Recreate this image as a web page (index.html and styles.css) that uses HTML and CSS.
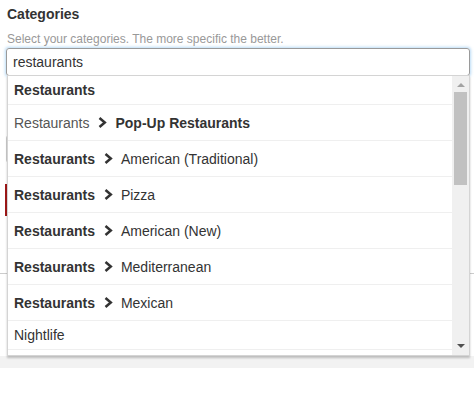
FILE: index.html
```html
<!DOCTYPE html>
<html>
<head>
<meta charset="utf-8">
<link rel="stylesheet" href="styles.css">
</head>
<body>
<div class="page">
  <div class="title">Categories</div>
  <div class="hint">Select your categories. The more specific the better.</div>
  <div class="input">restaurants</div>
  <div class="behind-box"></div>
  <div class="behind-red"></div>
  <div class="behind-rule"></div>
  <div class="band"></div>

  <div class="dropdown">
    <div class="list">
      <div class="row"><b>Restaurants</b></div>
      <div class="row sub"><span class="muted">Restaurants</span><svg class="chev" viewBox="0 0 9 11"><polyline points="1.5,1 6.8,5.5 1.5,10"/></svg><b>Pop-Up Restaurants</b></div>
      <div class="row sub"><b>Restaurants</b><svg class="chev" viewBox="0 0 9 11"><polyline points="1.5,1 6.8,5.5 1.5,10"/></svg><span>American (Traditional)</span></div>
      <div class="row sub"><b>Restaurants</b><svg class="chev" viewBox="0 0 9 11"><polyline points="1.5,1 6.8,5.5 1.5,10"/></svg><span>Pizza</span></div>
      <div class="row sub"><b>Restaurants</b><svg class="chev" viewBox="0 0 9 11"><polyline points="1.5,1 6.8,5.5 1.5,10"/></svg><span>American (New)</span></div>
      <div class="row sub"><b>Restaurants</b><svg class="chev" viewBox="0 0 9 11"><polyline points="1.5,1 6.8,5.5 1.5,10"/></svg><span>Mediterranean</span></div>
      <div class="row sub"><b>Restaurants</b><svg class="chev" viewBox="0 0 9 11"><polyline points="1.5,1 6.8,5.5 1.5,10"/></svg><span>Mexican</span></div>
      <div class="row"><span>Nightlife</span></div>
      <div class="row"></div>
    </div>
    <div class="scrollbar">
      <div class="arrow up"></div>
      <div class="track"><div class="thumb"></div></div>
      <div class="arrow down"></div>
    </div>
  </div>
</div>
</body>
</html>
```
FILE: styles.css
```css
html, body {
  margin: 0;
  padding: 0;
  background: #fff;
}
body {
  font-family: "Liberation Sans", Arial, sans-serif;
  color: #333;
  width: 474px;
  height: 404px;
  overflow: hidden;
}
.page {
  position: relative;
  padding: 6px 4px 0 6px;
}
.title {
  font-size: 14px;
  line-height: 16px;
  font-weight: bold;
  color: #333;
  padding-left: 1px;
}
.hint {
  margin-top: 10px;
  font-size: 12px;
  line-height: 14px;
  color: #999;
  padding-left: 1px;
}
.input {
  margin-top: 2px;
  height: 16px;
  padding: 5px 6px;
  border: 1px solid #9a9a9a;
  border-radius: 3px;
  box-shadow: 0 0 3px 1px rgba(102, 175, 233, 0.45);
  font-size: 14px;
  line-height: 16px;
  color: #333;
}
.behind-box {
  margin-top: 59px;
  height: 26px;
  border: 1px solid #cfcfcf;
  border-radius: 3px;
}
.behind-red {
  margin-top: 21px;
  margin-left: -1px;
  height: 32px;
  border-left: 2px solid #a01818;
}
.behind-rule {
  margin: 57px -4px 0 -6px;
  border-top: 1px solid #ccc;
}
.band {
  margin: 82px -4px 0 -6px;
  height: 12px;
  background: #f2f2f2;
}
.dropdown {
  position: absolute;
  top: 75px;
  left: 7px;
  width: 461px;
  height: 279px;
  border: 1px solid #d4d4d4;
  background: #fff;
  box-shadow: 0 2px 2px rgba(0, 0, 0, 0.22);
  display: flex;
  overflow: hidden;
}
.list {
  flex: 1;
  overflow: hidden;
}
.row {
  height: 28px;
  border-bottom: 1px solid #efefef;
  padding-left: 6px;
  display: flex;
  align-items: center;
  font-size: 14px;
  color: #333;
  white-space: nowrap;
}
.row.sub {
  height: 35px;
}
.row b {
  font-weight: bold;
  color: #333;
}
.row .muted {
  color: #555;
}
.chev {
  width: 9px;
  height: 11px;
  margin: 0 8px 0 9px;
  fill: none;
  stroke: #333;
  stroke-width: 2.5;
}
.scrollbar {
  width: 17px;
  background: #f0f0f0;
  display: flex;
  flex-direction: column;
  align-items: center;
}
.arrow {
  width: 0;
  height: 0;
  border-left: 4px solid transparent;
  border-right: 4px solid transparent;
}
.arrow.up {
  margin-top: 7px;
  border-bottom: 4px solid #a3a3a3;
}
.arrow.down {
  margin-bottom: 7px;
  border-top: 4px solid #505050;
}
.track {
  flex: 1;
  width: 13px;
  padding-top: 5px;
}
.thumb {
  height: 93px;
  background: #c1c1c1;
}
```
